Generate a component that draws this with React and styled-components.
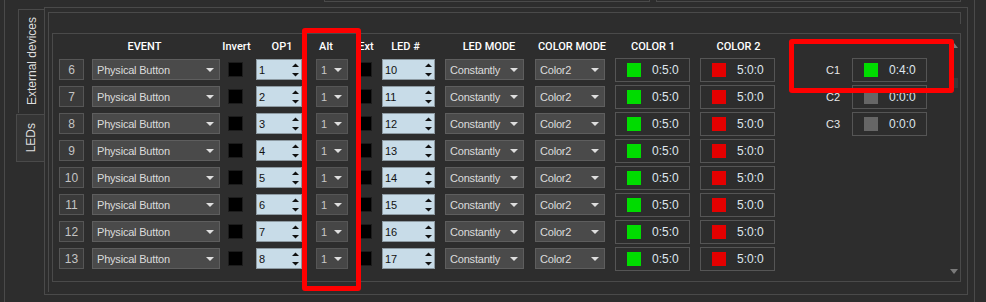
import React from "react";
import styled, { createGlobalStyle } from "styled-components";

const LINE = "#4a4a4a";

const Global = createGlobalStyle`
  html, body { margin: 0; padding: 0; background: #2d2d2d; }
  body { font-family: "Liberation Sans", Arial, sans-serif; }
  #root { width: 986px; height: 302px; overflow: hidden; }
`;

const Page = styled.div`
  position: relative;
  width: 986px;
  height: 302px;
  overflow: hidden;
  background: #2d2d2d;
`;

const Shell = styled.div`
  margin-left: 4px;
  width: 971px;
  height: 302px;
  box-sizing: border-box;
  border-left: 1px solid ${LINE};
  border-right: 1px solid ${LINE};
  display: flex;
  flex-direction: column;
`;

const TopStrip = styled.div`
  height: 7px;
  display: flex;
  padding-left: 319px;
  gap: 6px;
`;

const StubBox = styled.div`
  width: ${(p) => p.$w}px;
  height: 2px;
  box-sizing: border-box;
  border: 1px solid ${LINE};
  border-top: none;
`;

const Body = styled.div`
  display: flex;
  flex: 1;
`;

const TabColumn = styled.div`
  width: 39px;
  display: flex;
  flex-direction: column;
  align-items: flex-end;
`;

const Tab = styled.div`
  box-sizing: border-box;
  width: ${(p) => (p.$active ? 26 : 28)}px;
  height: ${(p) => (p.$active ? 104 : 48)}px;
  margin-top: ${(p) => (p.$active ? 2 : 1)}px;
  border-left: 1px solid ${LINE};
  border-top: 1px solid ${LINE};
  border-bottom: ${(p) => (p.$active ? "none" : `1px solid ${LINE}`)};
  background: ${(p) => (p.$active ? "transparent" : "#353535")};
  display: flex;
  align-items: center;
  justify-content: center;
`;

const TabLabel = styled.span`
  writing-mode: vertical-rl;
  transform: rotate(180deg);
  font-size: 12px;
  color: #dedede;
  white-space: nowrap;
`;

const FrameA = styled.div`
  width: 924px;
  height: 288px;
  box-sizing: border-box;
  border: 1px solid ${LINE};
  padding: 4px 0 0 3px;
`;

const FrameB = styled.div`
  position: relative;
  width: 913px;
  height: 280px;
  box-sizing: border-box;
  border-top: 1px solid ${LINE};
  border-left: 1px solid ${LINE};
  padding: 20px 0 0 3px;
  &::after {
    content: "";
    position: absolute;
    right: 0;
    top: -1px;
    width: 1px;
    height: 12px;
    background: ${LINE};
  }
`;

const Panel = styled.div`
  width: 909px;
  height: 249px;
  box-sizing: border-box;
  border: 1px solid ${LINE};
  display: flex;
  padding-left: 6px;
`;

const Table = styled.div`
  display: grid;
  grid-template-columns: 33px 128px 36px 60px 36px 30px 63px 90px 80px 85px 75px;
  grid-template-rows: 22px;
  grid-auto-rows: 27px;
  align-items: center;
  align-content: start;
`;

const Head = styled.div`
  font-family: Roboto, "Liberation Sans", sans-serif;
  font-weight: 500;
  font-size: 11px;
  color: #ffffff;
  text-align: center;
  white-space: nowrap;
  padding-top: 2px;
  padding-left: ${(p) => (p.$dx > 0 ? 2 * p.$dx : 0)}px;
  padding-right: ${(p) => (p.$dx < 0 ? -2 * p.$dx : 0)}px;
`;

const NumBox = styled.div`
  width: 25px;
  height: 21px;
  box-sizing: border-box;
  background: #3a3a3a;
  border: 1px solid #565656;
  color: #c4c4c4;
  font-size: 12px;
  display: flex;
  align-items: center;
  justify-content: center;
`;

const Combo = styled.div`
  width: ${(p) => p.$w}px;
  height: 21px;
  box-sizing: border-box;
  background: ${(p) => (p.$dim ? "#464646" : "#4a4a4a")};
  border: 1px solid ${(p) => (p.$dim ? "#565656" : "#5e5e5e")};
  display: flex;
  align-items: center;
  padding: 0 5px 0 4px;
  color: ${(p) => (p.$dim ? "#c8c8c8" : "#dcdcdc")};
  font-size: 11px;
  letter-spacing: -0.2px;
`;

const ComboText = styled.span`
  flex: 1;
  white-space: nowrap;
  overflow: hidden;
`;

const Spin = styled.div`
  width: ${(p) => p.$w}px;
  height: 21px;
  box-sizing: border-box;
  background: #c8dce8;
  border: 1px solid #8d9aa2;
  display: flex;
  align-items: center;
  padding: 0 2px 0 2px;
  color: #111111;
  font-size: 11px;
`;

const Check = styled.div`
  width: 15px;
  height: 15px;
  box-sizing: border-box;
  background: #000000;
  border: 1px solid #1c1c1c;
  margin-left: ${(p) => p.$ml}px;
`;

const ColorCell = styled.div`
  width: 75px;
  height: 24px;
  box-sizing: border-box;
  border: 1px solid #555555;
  display: flex;
  align-items: center;
  padding-left: 11px;
  gap: 11px;
  font-size: 12px;
  color: #dfe6ee;
`;

const Swatch = styled.span`
  width: 14px;
  height: 14px;
  background: ${(p) => p.$c};
  flex: none;
`;

const Side = styled.div`
  margin-left: 25px;
  padding-top: 22px;
  display: grid;
  grid-template-columns: 40px 75px;
  column-gap: 12px;
  grid-auto-rows: 27px;
  align-items: center;
  align-content: start;
`;

const SideLabel = styled.div`
  text-align: right;
  font-size: 11px;
  color: #e6e6e6;
`;

const Scroll = styled.div`
  margin-left: auto;
  margin-right: 1px;
  width: 10px;
  display: flex;
  flex-direction: column;
  align-items: center;
  padding: 9px 0 7px;
  box-sizing: border-box;
`;

const Thumb = styled.div`
  width: 8px;
  height: 10px;
  margin-top: 30px;
  background: #393939;
`;

const DownArrow = styled.svg`
  margin-top: auto;
`;

const Mark = styled.div`
  position: absolute;
  left: ${(p) => p.$x}px;
  top: ${(p) => p.$y}px;
  width: ${(p) => p.$w}px;
  height: ${(p) => p.$h}px;
  border: 5px solid #ff0000;
  border-radius: 3px;
  box-sizing: border-box;
  pointer-events: none;
`;

const Arrow = () => (
  <svg width="8" height="4" viewBox="0 0 8 4">
    <polygon points="0,0 8,0 4,4" fill="#dedede" />
  </svg>
);

const SpinArrows = () => (
  <svg width="7" height="14" viewBox="0 0 7 14">
    <polygon points="0,4 3.5,0.5 7,4" fill="#111" />
    <polygon points="0,10 3.5,13.5 7,10" fill="#111" />
  </svg>
);

const headers = [
  { t: "", dx: 0 },
  { t: "EVENT", dx: -11.5 },
  { t: "Invert", dx: -1.5 },
  { t: "OP1", dx: -4 },
  { t: "Alt", dx: -8 },
  { t: "Ext", dx: -1 },
  { t: "LED #", dx: -8 },
  { t: "LED MODE", dx: -1 },
  { t: "COLOR MODE", dx: -3 },
  { t: "COLOR 1", dx: -4.5 },
  { t: "COLOR 2", dx: 1 },
];

const rows = [6, 7, 8, 9, 10, 11, 12, 13].map((n, i) => ({
  n,
  op1: i + 1,
  led: 10 + i,
}));

const sides = [
  { l: "C1", c: "#00dc00", v: "0:4:0" },
  { l: "C2", c: "#666666", v: "0:0:0" },
  { l: "C3", c: "#666666", v: "0:0:0" },
];

export default function App() {
  return (
    <Page>
      <Global />
      <Shell>
        <TopStrip>
          <StubBox $w={326} />
          <StubBox $w={305} />
        </TopStrip>
        <Body>
          <TabColumn>
            <Tab $active>
              <TabLabel>External devices</TabLabel>
            </Tab>
            <Tab>
              <TabLabel>LEDs</TabLabel>
            </Tab>
          </TabColumn>
          <FrameA>
            <FrameB>
              <Panel>
                <Table>
                  {headers.map((h, i) => (
                    <Head key={i} $dx={h.dx}>
                      {h.t}
                    </Head>
                  ))}
                  {rows.map((r) => (
                    <React.Fragment key={r.n}>
                      <NumBox>{r.n}</NumBox>
                      <Combo $w={128}>
                        <ComboText>Physical Button</ComboText>
                        <Arrow />
                      </Combo>
                      <Check $ml={8} />
                      <Spin $w={46}>
                        <ComboText>{r.op1}</ComboText>
                        <SpinArrows />
                      </Spin>
                      <Combo $w={32} $dim>
                        <ComboText>1</ComboText>
                        <Arrow />
                      </Combo>
                      <Check $ml={5} />
                      <Spin $w={53}>
                        <ComboText>{r.led}</ComboText>
                        <SpinArrows />
                      </Spin>
                      <Combo $w={79}>
                        <ComboText>Constantly</ComboText>
                        <Arrow />
                      </Combo>
                      <Combo $w={70}>
                        <ComboText>Color2</ComboText>
                        <Arrow />
                      </Combo>
                      <ColorCell>
                        <Swatch $c="#00dc00" />
                        0:5:0
                      </ColorCell>
                      <ColorCell>
                        <Swatch $c="#e40000" />
                        5:0:0
                      </ColorCell>
                    </React.Fragment>
                  ))}
                </Table>
                <Side>
                  {sides.map((s) => (
                    <React.Fragment key={s.l}>
                      <SideLabel>{s.l}</SideLabel>
                      <ColorCell>
                        <Swatch $c={s.c} />
                        {s.v}
                      </ColorCell>
                    </React.Fragment>
                  ))}
                </Side>
                <Scroll>
                  <svg width="8" height="5" viewBox="0 0 8 5">
                    <polygon points="0,5 4,0 8,5" fill="#7a7a7a" />
                  </svg>
                  <Thumb />
                  <DownArrow width="8" height="5" viewBox="0 0 8 5">
                    <polygon points="0,0 8,0 4,5" fill="#7a7a7a" />
                  </DownArrow>
                </Scroll>
              </Panel>
            </FrameB>
          </FrameA>
        </Body>
      </Shell>
      <Mark $x={302} $y={28} $w={59} $h={263} />
      <Mark $x={789} $y={39} $w={165} $h={54} />
    </Page>
  );
}
